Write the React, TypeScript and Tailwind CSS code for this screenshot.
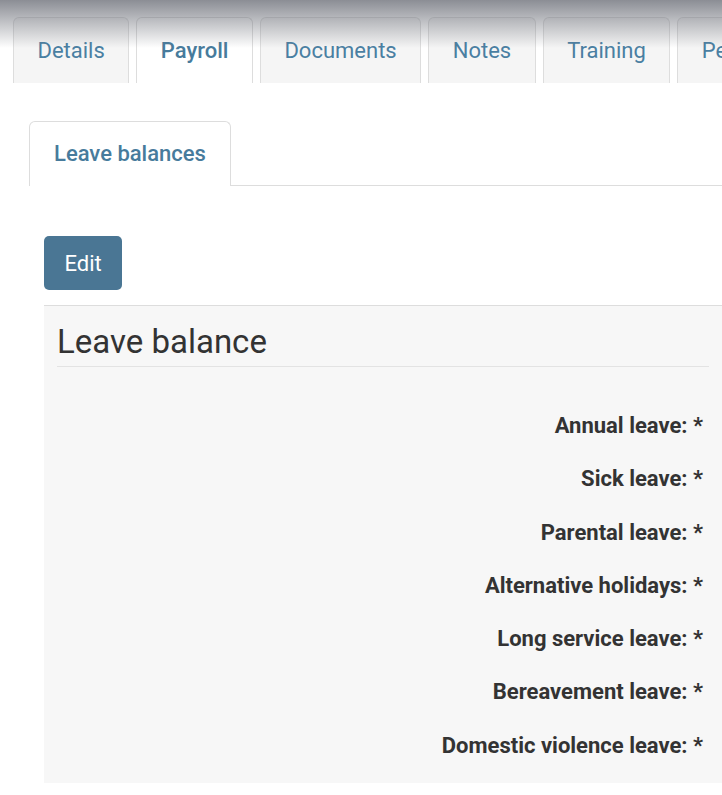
import React from "react"

const tabs = ["Details", "Payroll", "Documents", "Notes", "Training", "Personal"]

const leaveTypes = [
  "Annual leave",
  "Sick leave",
  "Parental leave",
  "Alternative holidays",
  "Long service leave",
  "Bereavement leave",
  "Domestic violence leave",
]

export default function App() {
  return (
    <div className="relative w-[722px] h-[795px] overflow-hidden bg-white font-['Roboto',sans-serif]">
      {/* shadow from the sticky header above */}
      <div className="pointer-events-none absolute inset-x-0 top-0 z-10 h-[48px] bg-linear-to-b from-[rgba(110,113,122,0.8)] to-transparent" />

      {/* Main tabs */}
      <div className="flex gap-[7px] pl-[13px] pt-[17px] whitespace-nowrap">
        {tabs.map((t) => (
          <div
            key={t}
            className={
              t === "Payroll"
                ? "shrink-0 px-[23.5px] py-[20px] text-[22px] leading-[25px] font-medium text-[#477b9c] bg-white border border-b-0 border-[#dddddd] rounded-t-[6px]"
                : "shrink-0 px-[23.5px] py-[20px] text-[22px] leading-[25px] text-[#4a7fa2] bg-[#f5f5f5] border border-b-0 border-[#dddddd] rounded-t-[6px]"
            }
          >
            {t}
          </div>
        ))}
      </div>

      {/* Sub tabs */}
      <div className="mt-[38px] ml-[29px] flex border-b border-[#dddddd]">
        <div className="-mb-px px-[24px] py-[19px] text-[22px] leading-[26px] font-medium text-[#477b9c] bg-white border border-b-0 border-[#dddddd] rounded-t-[6px]">
          Leave balances
        </div>
      </div>

      <div className="ml-[44px] mt-[50px]">
        <button className="h-[54px] px-[20.5px] rounded-[5px] bg-[#4a7694] text-white text-[22px]">Edit</button>
      </div>

      {/* Leave balance panel */}
      <div className="ml-[44px] mt-[15px] bg-[#f7f7f7] border-t border-[#dddddd] pb-[25px]">
        <div className="mx-[13px] pt-[16px] pb-[4px] border-b border-[#e3e3e3]">
          <h2 className="text-[33px] leading-[40px] text-[#333333]">Leave balance</h2>
        </div>
        <div className="pt-[46px] pr-[19px] flex flex-col gap-[28.3px]">
          {leaveTypes.map((l) => (
            <div key={l} className="text-right text-[22px] leading-[25px] font-bold text-[#333333]">
              {l}: *
            </div>
          ))}
        </div>
      </div>
    </div>
  )
}
